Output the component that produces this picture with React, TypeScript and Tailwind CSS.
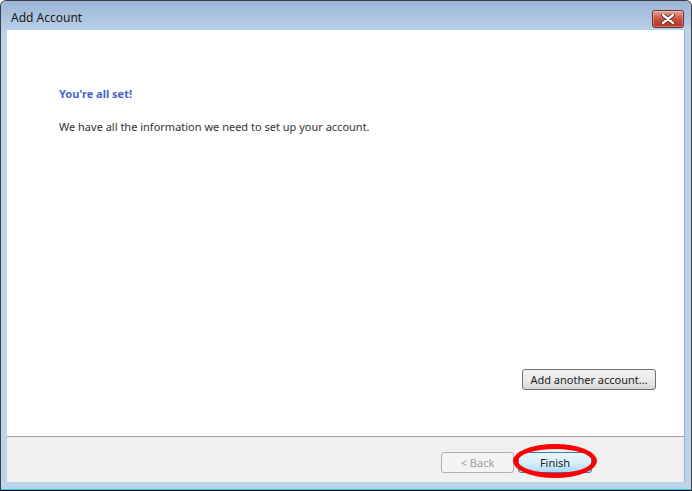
const font = { fontFamily: '"Noto Sans", "Open Sans", sans-serif' };

const CloseButton = () => (
  <div className="w-[32px] h-[18px] rounded-[3px] border border-[#6b2a24] bg-gradient-to-b from-[#e8a393] via-[#c9513c] to-[#b13521] flex items-center justify-center shadow-[inset_0_0_0_1px_rgba(255,255,255,0.35)]">
    <svg width="14" height="10" viewBox="0 0 14 10">
      <path
        d="M2 1 L12 9 M12 1 L2 9"
        stroke="#5a1e14"
        strokeWidth="4"
        strokeLinecap="round"
      />
      <path
        d="M2 1 L12 9 M12 1 L2 9"
        stroke="#ffffff"
        strokeWidth="2.4"
        strokeLinecap="round"
      />
    </svg>
  </div>
);

export default function App() {
  return (
    <div
      className="w-[692px] h-[491px] flex flex-col bg-[#bcd3ea] border-t border-l border-r border-[#3a3f47] rounded-t-[6px] overflow-hidden text-[11px]"
      style={font}
    >
      <div className="h-[29px] shrink-0 flex items-start justify-between bg-gradient-to-b from-[#9bb5d4] to-[#b9d0e9] pl-[10px] pr-[7px]">
        <span className="mt-[9px] text-[12px] leading-[16px] text-[#1a1a1a]">Add Account</span>
        <div className="mt-[9px]">
          <CloseButton />
        </div>
      </div>
      <div className="flex-1 flex flex-col mx-[6px] border-r border-[#8fb3d6]">
        <div className="h-[406px] bg-white flex flex-col pl-[52px] pr-[28px]">
          <div className="mt-[56px] font-bold text-[#4767c9] leading-[16px]">You're all set!</div>
          <div className="mt-[17px] text-[#333333] leading-[16px]">
            We have all the information we need to set up your account.
          </div>
          <div className="mt-auto mb-[46px] flex justify-end">
            <button
              type="button"
              className="h-[21px] w-[134px] rounded-[3px] border border-[#707070] bg-gradient-to-b from-[#f2f2f2] via-[#ebebeb] to-[#d6d6d6] text-[#1a1a1a] leading-[16px]"
            >
              Add another account...
            </button>
          </div>
        </div>
        <div className="h-[1px] bg-[#a0a0a0]" />
        <div className="h-[45px] bg-[#f0f0f0] flex items-start pl-[434px] pt-[15px] gap-[4px]">
          <button
            type="button"
            className="w-[73px] h-[21px] rounded-[3px] border border-[#adb2b5] bg-[#f4f4f4] text-[#a0a0a0] leading-[16px]"
          >
            &lt; Back
          </button>
          <div className="relative">
            <button
              type="button"
              className="w-[74px] h-[21px] rounded-[3px] border border-[#3c7fb1] bg-gradient-to-b from-[#eaf6fd] via-[#d9f0fc] to-[#a7d9f5] text-[#1a1a1a] leading-[16px]"
            >
              Finish
            </button>
            <div className="absolute left-[-5px] top-[-8px] w-[84px] h-[34px] rounded-[50%] border-[5px] border-[#ff0000] pointer-events-none" />
          </div>
        </div>
      </div>
      <div className="h-[6px] shrink-0" />
      <div className="h-[1px] bg-[#39c6e6]" />
      <div className="h-[1px] bg-[#111111]" />
    </div>
  );
}
